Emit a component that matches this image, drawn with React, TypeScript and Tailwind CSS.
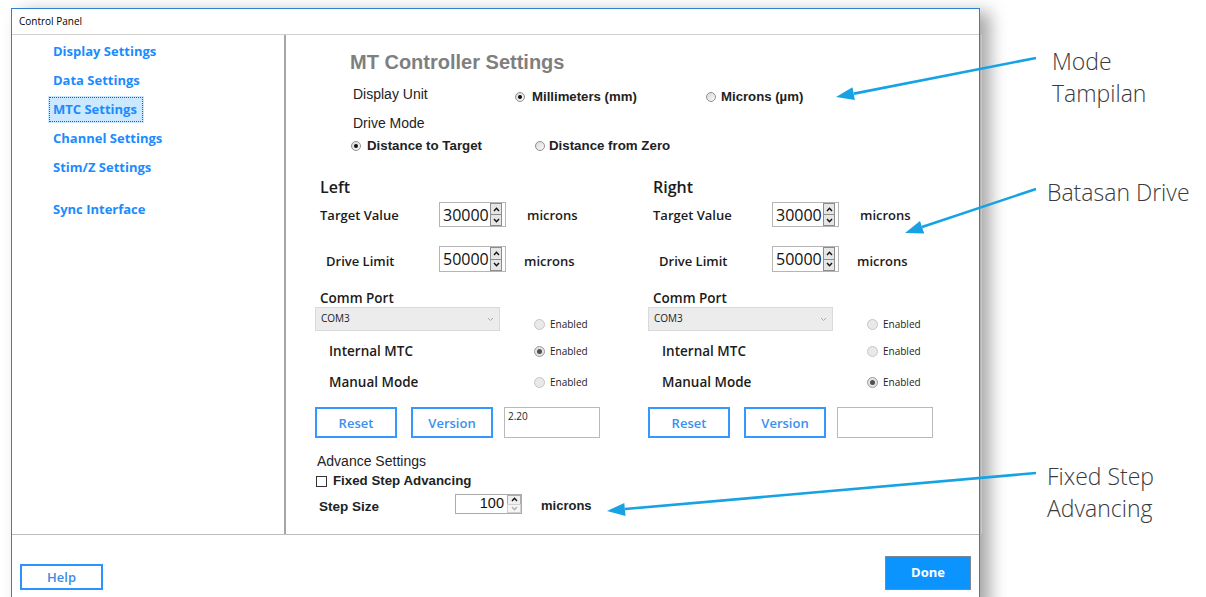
import React from "react";

type Side = {
    title: string;
    target: string;
    limit: string;
    commEnabled: boolean;
    internal: boolean;
    manual: boolean;
    version: string;
};

const SIDES: Side[] = [
    {
        title: "Left",
        target: "30000",
        limit: "50000",
        commEnabled: false,
        internal: true,
        manual: false,
        version: "2.20",
    },
    {
        title: "Right",
        target: "30000",
        limit: "50000",
        commEnabled: false,
        internal: false,
        manual: true,
        version: "",
    },
];

const NAV_ITEMS = [
    "Display Settings",
    "Data Settings",
    "MTC Settings",
    "Channel Settings",
    "Stim/Z Settings",
];

// arrow shaft end points and triangular heads, page coordinates
const ARROWS = [
    { x1: 1036, y1: 58, x2: 854, y2: 93.6, head: "836,97 854.9,100 852.5,87.2" },
    { x1: 1036, y1: 189, x2: 922, y2: 227, head: "905,233 924.2,233.5 920,221.1" },
    { x1: 1036, y1: 473, x2: 625, y2: 509, head: "607,511 625.5,516 624.3,502.9" },
];

export default function App() {
    return (
        <div className="relative flex h-[597px] w-[1206px] overflow-hidden bg-white">
            <ControlPanelWindow />
            <Callouts />
            <svg
                className="pointer-events-none absolute inset-0"
                width={1206}
                height={597}
            >
                {ARROWS.map((a) => (
                    <g key={a.y1}>
                        <line
                            x1={a.x1}
                            y1={a.y1}
                            x2={a.x2}
                            y2={a.y2}
                            stroke="#17a2e4"
                            strokeWidth={2.6}
                        />
                        <polygon points={a.head} fill="#17a2e4" />
                    </g>
                ))}
            </svg>
        </div>
    );
}

function Callouts() {
    return (
        <div className="ml-[67px] flex flex-col pt-[45px] font-['Open_Sans',sans-serif] text-[23px] font-light leading-[32px] text-[#3a3a3a]">
            <div className="pl-[5px]">
                <div>Mode</div>
                <div>Tampilan</div>
            </div>
            <div className="mt-[67px] whitespace-nowrap">Batasan Drive</div>
            <div className="mt-[252px]">
                <div>Fixed Step</div>
                <div>Advancing</div>
            </div>
        </div>
    );
}

function ControlPanelWindow() {
    return (
        <div className="ml-[11px] mt-[8px] flex h-[600px] w-[969px] shrink-0 flex-col border border-b-0 border-[#2f7fd0] bg-white shadow-[10px_4px_16px_0px_rgba(0,0,0,0.35)]">
            <div className="flex h-[26px] shrink-0 items-center border-b border-[#d0d0d0] pl-[7px] font-['Open_Sans',sans-serif] text-[10px] text-black">
                Control Panel
            </div>

            <div className="flex h-[500px] shrink-0 border-b border-[#bdbdbd]">
                <Sidebar />
                <MtcSettings />
            </div>

            <div className="flex h-[62px] shrink-0 items-end justify-between px-[8px] pb-[7px] font-['Open_Sans',sans-serif]">
                <button
                    type="button"
                    className="flex h-[26px] w-[83px] items-center justify-center border-2 border-[#2b93ff] pt-[2px] text-[13px] font-semibold text-[#3b8ce6]"
                >
                    Help
                </button>
                <button
                    type="button"
                    className="flex h-[34px] w-[86px] items-center justify-center border border-[#7d8a96] bg-[#0b94fe] text-[13px] font-bold text-white"
                >
                    Done
                </button>
            </div>
        </div>
    );
}

function Sidebar() {
    return (
        <div className="flex w-[274px] shrink-0 flex-col border-r-2 border-[#a6a6a6] pl-[41px] pt-[2px] font-['Open_Sans',sans-serif] text-[13px] font-bold text-[#1a8cff]">
            {NAV_ITEMS.map((item) =>
                item === "MTC Settings" ? (
                    <div key={item} className="flex h-[29px] items-center">
                        <span className="-ml-[5px] flex h-[27px] w-[96px] bg-[#cce8ff] p-[1px]">
                            <span className="flex flex-1 items-center border border-dotted border-[#555] px-[3px]">
                                {item}
                            </span>
                        </span>
                    </div>
                ) : (
                    <div key={item} className="flex h-[29px] items-center">
                        {item}
                    </div>
                ),
            )}
            <div className="mt-[13px] flex h-[29px] items-center">
                Sync Interface
            </div>
        </div>
    );
}

function ClassicRadio({ checked }: { checked?: boolean }) {
    return (
        <span className="flex h-[10px] w-[10px] shrink-0 items-center justify-center rounded-full border border-[#8f8f8f] bg-linear-to-br from-[#d8d8d8] to-[#fbfbfb]">
            {checked && (
                <span className="h-[4px] w-[4px] rounded-full bg-[#111]" />
            )}
        </span>
    );
}

function EnabledOption({ checked }: { checked?: boolean }) {
    return (
        <span className="flex items-center gap-[5px] text-[10px] text-[#222]">
            <span
                className={
                    checked
                        ? "flex h-[11px] w-[11px] items-center justify-center rounded-full border border-[#9a9a9a] bg-[#e4e4e4]"
                        : "flex h-[11px] w-[11px] items-center justify-center rounded-full border border-[#c6c6c6] bg-[#e9e9e9]"
                }
            >
                {checked && (
                    <span className="h-[5px] w-[5px] rounded-full bg-[#505050]" />
                )}
            </span>
            Enabled
        </span>
    );
}

function SpinArrow({ up, muted }: { up?: boolean; muted?: boolean }) {
    return (
        <svg width={7} height={5} viewBox="0 0 7 5">
            <path
                d={up ? "M1 4 L3.5 1.3 L6 4" : "M1 1 L3.5 3.7 L6 1"}
                fill="none"
                stroke={muted ? "#b0b0b0" : "#111"}
                strokeWidth={1.4}
            />
        </svg>
    );
}

function SpinBox({ value }: { value: string }) {
    return (
        <div className="flex h-full w-[67px] shrink-0 border border-[#b5b5b5] bg-white">
            <span className="flex flex-1 items-center pl-[3px] text-[16px] leading-none text-[#111]">
                {value}
            </span>
            <div className="mr-[3px] flex w-[12px] flex-col">
                <span className="flex flex-1 items-center justify-center border border-[#8c8c8c] bg-[#e6e6e6]">
                    <SpinArrow up />
                </span>
                <span className="-mt-px flex flex-1 items-center justify-center border border-[#8c8c8c] bg-[#e6e6e6]">
                    <SpinArrow />
                </span>
            </div>
        </div>
    );
}

function ComboBox({ value }: { value: string }) {
    return (
        <div className="flex h-[24px] w-[185px] shrink-0 justify-between border border-[#d9d9d9] bg-[#ececec] pl-[5px] pr-[5px] pt-[3px] text-[10px] leading-[14px] text-[#222]">
            {value}
            <svg width={7} height={5} viewBox="0 0 7 5" className="mt-[6px]">
                <path
                    d="M1 1 L3.5 3.5 L6 1"
                    fill="none"
                    stroke="#a8a8a8"
                    strokeWidth={1}
                />
            </svg>
        </div>
    );
}

function OutlineButton({ label }: { label: string }) {
    return (
        <button
            type="button"
            className="flex h-full w-[82px] items-center justify-center border-2 border-[#3399ff] pt-[2px] text-[13px] font-semibold text-[#3a8ff0]"
        >
            {label}
        </button>
    );
}

function ControllerColumn({ side }: { side: Side }) {
    return (
        <div className="flex flex-col font-['Open_Sans',sans-serif] text-[#1b1b1b]">
            <div className="flex h-[20px] items-center pl-[5px] text-[16px] font-semibold">
                {side.title}
            </div>

            <div className="mt-[5px] flex h-[25px] items-center">
                <span className="mt-[3px] w-[124px] pl-[5px] text-[13px] font-semibold">
                    Target Value
                </span>
                <SpinBox value={side.target} />
                <span className="ml-[21px] mt-[3px] text-[13px] font-semibold">
                    microns
                </span>
            </div>

            <div className="mt-[19px] flex h-[26px] items-center">
                <span className="mt-[5px] w-[124px] pl-[11px] text-[13px] font-semibold">
                    Drive Limit
                </span>
                <SpinBox value={side.limit} />
                <span className="ml-[18px] mt-[5px] text-[13px] font-semibold">
                    microns
                </span>
            </div>

            <div className="mt-[17px] flex h-[18px] items-center pl-[5px] text-[13.5px] font-semibold">
                Comm Port
            </div>
            <div className="flex h-[24px] items-end">
                <ComboBox value="COM3" />
                <div className="ml-[34px] flex h-[14px] items-center">
                    <EnabledOption checked={side.commEnabled} />
                </div>
            </div>

            <div className="mt-[10px] flex h-[20px] items-center">
                <span className="w-[219px] pl-[14px] text-[13.5px] font-semibold">
                    Internal MTC
                </span>
                <EnabledOption checked={side.internal} />
            </div>

            <div className="mt-[11px] flex h-[20px] items-center">
                <span className="w-[219px] pl-[14px] text-[13.5px] font-semibold">
                    Manual Mode
                </span>
                <EnabledOption checked={side.manual} />
            </div>

            <div className="mt-[15px] flex h-[31px]">
                <OutlineButton label="Reset" />
                <div className="ml-[14px] h-full">
                    <OutlineButton label="Version" />
                </div>
                <div className="ml-[11px] h-full w-[96px] border border-[#b9b9b9] pl-[3px] pt-[1px] text-[10px] leading-[14px] text-[#222]">
                    {side.version}
                </div>
            </div>
        </div>
    );
}

function MtcSettings() {
    return (
        <div className="flex flex-1 flex-col border-r border-[#c9c9c9] text-[#1e231f]">
            <h2 className="ml-[64px] mt-[15px] h-[24px] font-['Liberation_Sans',Arial,sans-serif] text-[20px] font-bold leading-[24px] text-[#7f7f7f]">
                MT Controller Settings
            </h2>

            <div className="mt-[12px] flex h-[20px] items-center pl-[67px] font-['Liberation_Sans',Arial,sans-serif]">
                <span className="-mt-[3px] w-[162px] text-[14px]">
                    Display Unit
                </span>
                <span className="mt-[2px] flex w-[191px] items-center gap-[7px] text-[13.2px] font-bold">
                    <ClassicRadio checked />
                    Millimeters (mm)
                </span>
                <span className="mt-[2px] flex items-center gap-[5px] text-[13.2px] font-bold">
                    <ClassicRadio />
                    Microns (µm)
                </span>
            </div>

            <div className="mt-[7px] flex h-[20px] items-center pl-[67px] font-['Liberation_Sans',Arial,sans-serif] text-[14px]">
                Drive Mode
            </div>

            <div className="mt-[3px] flex h-[20px] items-center pl-[65px] font-['Liberation_Sans',Arial,sans-serif] text-[13.3px] font-bold">
                <span className="flex w-[184px] items-center gap-[6px]">
                    <ClassicRadio checked />
                    Distance to Target
                </span>
                <span className="flex items-center gap-[4px]">
                    <ClassicRadio />
                    Distance from Zero
                </span>
            </div>

            <div className="mt-[21px] grid grid-cols-[333px_333px] pl-[29px]">
                {SIDES.map((side) => (
                    <ControllerColumn key={side.title} side={side} />
                ))}
            </div>

            <div className="mt-[13px] flex h-[20px] items-center pl-[31px] font-['Liberation_Sans',Arial,sans-serif] text-[14px]">
                Advance Settings
            </div>
            <div className="flex h-[20px] items-center gap-[6px] pl-[30px] font-['Liberation_Sans',Arial,sans-serif] text-[13.3px] font-bold">
                <span className="h-[11px] w-[11px] border border-[#333] bg-white" />
                Fixed Step Advancing
            </div>
            <div className="mt-[3px] flex h-[20px] items-center pl-[33px] font-['Liberation_Sans',Arial,sans-serif] font-bold">
                <span className="mt-[6px] w-[136px] text-[13.5px]">
                    Step Size
                </span>
                <div className="flex h-full w-[67px] border border-[#ababab] bg-white">
                    <span className="flex flex-1 items-center justify-end pr-[3px] text-[14.5px] font-normal text-[#111]">
                        100
                    </span>
                    <div className="flex w-[14px] flex-col">
                        <span className="flex flex-1 items-center justify-center border border-[#adadad] bg-[#f0f0f0]">
                            <SpinArrow up />
                        </span>
                        <span className="-mt-px flex flex-1 items-center justify-center border border-[#d0d0d0] bg-[#f6f6f6]">
                            <SpinArrow muted />
                        </span>
                    </div>
                </div>
                <span className="ml-[19px] mt-[4px] text-[13px]">microns</span>
            </div>
        </div>
    );
}
